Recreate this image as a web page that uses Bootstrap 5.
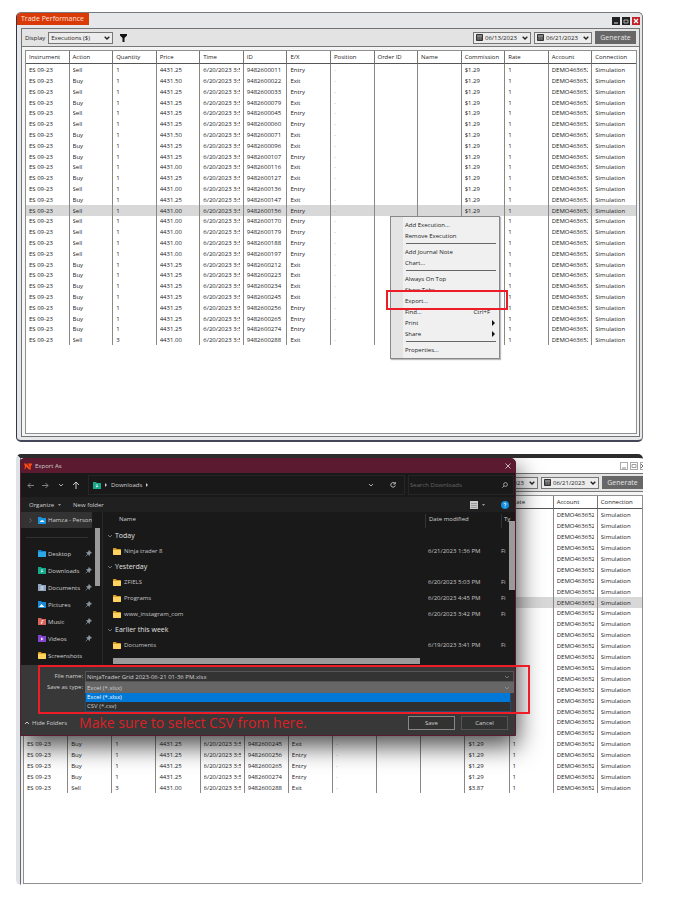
<!DOCTYPE html>
<html lang="en">
<head>
<meta charset="utf-8">
<meta name="viewport" content="width=device-width, initial-scale=1">
<title>Trade Performance</title>
<link href="https://cdn.jsdelivr.net/npm/bootstrap@5.3.0/dist/css/bootstrap.min.css" rel="stylesheet">
<style>
body{font-family:"Open Sans","Noto Sans",sans-serif;font-size:6px;line-height:10px;color:#222;background:#fff}
.page{padding:12px 40px 12px 16px;gap:12px}
button,input,select{font:inherit;color:inherit;border:0;border-radius:0;background:none;padding:0;margin:0;appearance:none;min-width:0}
svg{display:block;flex:none}
.win{height:430px;overflow:hidden;border-radius:5px}
.win-a{background:#e6e7e9;border:1px solid #77797c;border-left-color:#33364a;border-bottom:2px solid #44465a}
.titlebar{height:15px;padding-right:2px}
.tab-on{background:#d93a08;color:#ffe3d8;height:12px;width:72px;font-size:7px;line-height:12px;padding:0 0 0 4px;white-space:nowrap}
.ctl{width:8px;height:8px;background:#222;margin-left:2px}
.ctl.close-x{background:#c4202b}
.frame{border:1px solid #717375;background:#f4f4f4}
.win-a .frame{margin:0 2px 3px 4px}
.tools{height:18px;background:#e3e3e3;border-bottom:1px solid #77797a;padding:0 3px;gap:3px}
.dd{border:1px solid #777;height:12px;background:#ececec;padding:0 2px;gap:2px}
.dd.wide{width:65px}.dd.date{width:58px}
.gen{height:13px;width:41px;background:#676767;color:#e6e6e6;font-size:7px;line-height:13px}
.gridbox{background:#fff;border:1px solid #8d8f91;margin:3px 2px 2px 3px}
.grid{width:100%;table-layout:fixed;border-collapse:separate;border-spacing:0;margin:0}
.grid th{height:13px;font-weight:400;border-bottom:1px solid #555;border-right:1px solid #777;padding:0 2px 0 3px;line-height:12px}
.grid td{height:11px;line-height:10px;padding:0 3px 0 3px;border-right:1px solid #888}
.grid tr>:last-child{border-right:0}
.grid td div{overflow:hidden;white-space:nowrap;height:10px}
.grid-a tbody tr:nth-child(5n) td,.grid-b tbody tr:nth-child(10n) td{height:10px}
.grid .sel td{background:#d8d8d8}
.grid .dash{color:#aaa}
.ctx{left:373px;top:203px;width:110px;background:#f0f0f0;border:1px solid #888;padding:2px 3px 3px 0;box-shadow:1px 1px 1px #bbb}
.ctx::before{content:"";position:absolute;left:0;top:0;bottom:0;width:12px;background:#e4e4e4}
.ctx button{display:flex;justify-content:space-between;align-items:center;width:100%;height:11px;padding:0 1px 0 14px;position:relative;text-align:left}
.ctx hr{margin:2px 0 2px 15px;border:0;border-top:1px solid #666;opacity:1}
.ctx .key{margin-right:5px}
.redbox{border:2px solid #ee1c24;pointer-events:none}
.rb-a{left:369px;top:277px;width:122px;height:20px}
.rb-b{left:18px;top:207px;width:492px;height:49px}
.win-b{height:431px;background:#fff;border-top:4px solid #2c2c2c;border-left:4px solid #dfe2e6}
.win-b::before{content:"";position:absolute;left:0;top:0;bottom:0;width:1px;background:#66686b}
.win-b .titlebar{height:15px;padding:0}
.win-b .ctl{background:#fff;border:1px solid #aaa}
.win-b .frame{border-right:0;border-bottom:0;margin-bottom:1px}
.win-b .gridbox{margin:3px 0 0 2px;height:389px}
.dlg{left:0;top:0;width:496px;height:278px;background:#191919;color:#d0d0d0;border:1px solid #5b1a30;border-radius:4px 5px 0 0;box-shadow:2px 10px 24px rgba(0,0,0,.7)}
.dlg-title{height:14px;background:#5b1a30;padding:0 4px 0 3px;gap:3px;border-radius:3px 4px 0 0}
.dlg-nav{height:24px;padding:2px 1px 2px 4px;gap:3px}
.arrows{width:60px;padding:0 5px 0 2px}
.well{border:1px solid #262626;height:20px;padding:0 4px;gap:4px}
.search{width:106px;padding:0 5px 0 1px}
.search input::placeholder{color:#666;opacity:1}
.dlg-tools{height:15px;background:#202020;padding:0 6px 0 8px;gap:12px}
.side{width:82px;border-right:1px solid #292929;height:153px}
.side-top{height:16px;background:#333;width:71px;padding-left:8px;gap:6px;white-space:nowrap;overflow:hidden}
.side-top div{gap:2px}
.side-rule{height:1px;background:#303030;margin:9px 14px 7px 5px}
.side a{display:flex;align-items:center;height:17px;gap:2px;padding:0 10px 0 17px;color:inherit;text-decoration:none}
.side a svg:last-child:not(:first-child){margin-left:auto}
.thumb{background:#9a9a9a}
.th-side{left:74px;top:16px;width:5px;height:58px}
.th-list{right:0;top:9px;width:6px;height:69px}
.th-h{left:10px;bottom:1px;width:307px;height:6px}
.row-head{height:16px;padding-top:2px}
.c-name{padding-left:16px}
.c-date{width:76px;padding-left:3px}
.c-type{width:11px;white-space:nowrap;margin-right:3px}
.row-head .c-date,.row-head .c-type{border-left:1px solid #333}
.row-head .c-type{width:11px;padding-left:2px}
.grp{height:15px;font-size:7px;padding-left:4px;gap:2px;color:#e0e0e0}
.file{height:16px;color:#c4c4c4}
.file .c-name{padding-left:10px;gap:3px}
.dlg-foot{background:#383838;padding:6px 1px 0 0;height:70px}
.field{display:grid;grid-template-columns:62px 1fr;column-gap:2px;text-align:right}
.field>div{height:11px;border:1px solid #555;background:#333;padding:0 3px 0 1px}
.field>div.lit{background:#666;border-color:#666}
.opts{margin:0 3px 0 64px;border:1px solid #234a70;border-top:0;background:#2f2f2f}
.opts button{display:block;width:100%;text-align:left;height:9px;line-height:9px;padding-left:1px}
.opts button.on{background:#0078d7;color:#fff}
.acts{padding:2px 6px 0 3px;gap:6px}
.acts .push{width:47px;height:14px;border:1px solid #555;background:#323232}
.acts .push.def{border-color:#888}
.note{font-size:14px;line-height:17px;color:#dd1f26;white-space:nowrap;padding-left:6px}
.hide-f{gap:2px}
</style>
<script src="https://cdn.jsdelivr.net/npm/bootstrap@5.3.0/dist/js/bootstrap.bundle.min.js"></script>
</head>
<body>
<svg width="0" height="0" class="position-absolute" aria-hidden="true">
<symbol id="chev" viewBox="0 0 6 4"><path d="M.7.7 3 3 5.300.7" fill="none" stroke="currentColor" stroke-width="1.400"/></symbol>
<symbol id="thin" viewBox="0 0 6 4"><path d="M1 1 3 3 5 1" fill="none" stroke="currentColor" stroke-width=".8"/></symbol>
<symbol id="cal" viewBox="0 0 7 7"><path d="M.5.5h6v6h-6z" fill="#555" stroke="#333"/><path d="M1 2h5" stroke="#ddd" stroke-width=".7"/><path d="M1 4h5M2.500 2.500V6M4.500 2.500V6" stroke="#888" stroke-width=".4"/></symbol>
<symbol id="folder" viewBox="0 0 8 7"><path d="M0 .8Q0 0 .8 0h2l1 1h3.400q.8 0 .8.8V6q0 1-.8 1H.8Q0 7 0 6z" fill="#dd9f25"/><path d="M0 2h8v4q0 1-.8 1H.8Q0 7 0 6z" fill="#ffd35f"/></symbol>
<symbol id="pin" viewBox="0 0 7 7"><path d="M4 .5 6.500 3 5.500 3.300 4.600 4.200 4.400 5.600 1.500 2.600 2.900 2.400 3.700 1.500zM3 4 .7 6.300" fill="#8d979f" stroke="#8d979f" stroke-width=".7"/></symbol>
</svg>
<main class="page d-flex flex-column">

<section class="win win-a position-relative d-flex flex-column">
  <div class="titlebar d-flex flex-shrink-0">
    <div class="tab-on">Trade Performance</div>
    <div class="d-flex ms-auto align-items-center controls">
      <button class="ctl" aria-label="Minimize"><svg width="8" height="8"><path d="M2 6h4" stroke="#ddd"/></svg></button>
      <button class="ctl" aria-label="Maximize"><svg width="8" height="8"><path d="M2 3h4v3H2z" fill="none" stroke="#ccc" stroke-width=".8"/></svg></button>
      <button class="ctl close-x" aria-label="Close"><svg width="8" height="8"><path d="M2 2l4 4M6 2 2 6" stroke="#fff" stroke-width="1.300"/></svg></button>
    </div>
  </div>
  <div class="frame flex-grow-1 d-flex flex-column">
    <div class="tools d-flex align-items-center flex-shrink-0">
      <label for="disp">Display</label>
      <div class="dd wide d-flex align-items-center"><select id="disp" class="flex-grow-1"><option>Executions ($)</option></select><svg width="6" height="4"><use href="#chev"/></svg></div>
      <button class="ms-1" aria-label="Filter"><svg width="7" height="8"><path d="M0 0h7v1.500L4.500 4v4h-2V4L0 1.500z" fill="#111"/></svg></button>
      <div class="dd date d-flex align-items-center ms-auto"><svg width="7" height="7"><use href="#cal"/></svg><select class="flex-grow-1" aria-label="From date"><option>06/13/2023</option></select><svg width="6" height="4"><use href="#chev"/></svg></div>
      <div class="dd date d-flex align-items-center"><svg width="7" height="7"><use href="#cal"/></svg><select class="flex-grow-1" aria-label="To date"><option>06/21/2023</option></select><svg width="6" height="4"><use href="#chev"/></svg></div>
      <button class="gen">Generate</button>
    </div>
    <div class="gridbox flex-grow-1"><table class="grid grid-a" data-selected="13"></table></div>
  </div>
  <div class="ctx position-absolute">
    <button>Add Execution...</button><button>Remove Execution</button><hr>
    <button>Add Journal Note</button><button>Chart...</button><hr>
    <button>Always On Top</button><button>Show Tabs</button><button>Export...</button>
    <button>Find...<span class="key">Ctrl+F</span></button>
    <button>Print<svg width="3" height="6"><path d="M0 0 3 3 0 6z" fill="#111"/></svg></button>
    <button>Share<svg width="3" height="6"><path d="M0 0 3 3 0 6z" fill="#111"/></svg></button><hr>
    <button>Properties...</button>
  </div>
  <div class="redbox rb-a position-absolute"></div>
</section>

<section class="win win-b position-relative d-flex flex-column">
  <div class="titlebar d-flex flex-shrink-0 justify-content-end align-items-center">
    <button class="ctl" aria-label="Minimize"><svg width="6" height="6"><path d="M1 5h4" stroke="#888"/></svg></button>
    <button class="ctl" aria-label="Maximize"><svg width="6" height="6"><path d="M1 1.500h4v3H1z" fill="none" stroke="#888" stroke-width=".8"/></svg></button>
    <button class="ctl w-auto border-end-0" aria-label="Close"><svg width="2" height="6"><path d="M0 1l2 2-2 2" fill="none" stroke="#666"/></svg></button>
  </div>
  <div class="frame flex-grow-1 d-flex flex-column">
    <div class="tools d-flex align-items-center flex-shrink-0 pe-0">
      <div class="dd date d-flex align-items-center ms-auto"><svg width="7" height="7"><use href="#cal"/></svg><select class="flex-grow-1" aria-label="From date"><option>06/13/2023</option></select><svg width="6" height="4"><use href="#chev"/></svg></div>
      <div class="dd date d-flex align-items-center"><svg width="7" height="7"><use href="#cal"/></svg><select class="flex-grow-1" aria-label="To date"><option>06/21/2023</option></select><svg width="6" height="4"><use href="#chev"/></svg></div>
      <button class="gen">Generate</button>
    </div>
    <div class="gridbox"><table class="grid grid-b" data-selected="8"></table></div>
  </div>

  <div class="dlg position-absolute d-flex flex-column">
    <div class="dlg-title d-flex align-items-center">
      <svg width="8" height="7" viewBox="0 0 8 7"><path d="M0 .5h2l1.500 2V.5H8v1.800H6.800V6.500H5L2 3.500V5L.3 6.500 1 3.500z" fill="#ff4b12"/><path d="M3.800 1 5.500 4.500" stroke="#5b1a30" stroke-width=".6"/></svg>
      <span>Export As</span>
      <button class="ms-auto" aria-label="Close"><svg width="6" height="6"><path d="M.5.5l5 5M5.500.5l-5 5" stroke="#ddd" stroke-width=".8"/></svg></button>
    </div>
    <div class="dlg-nav d-flex align-items-center flex-shrink-0">
      <div class="arrows d-flex justify-content-between align-items-center">
        <button aria-label="Back"><svg width="7" height="7"><path d="M3.500 1 1 3.500 3.500 6M1 3.500h6" fill="none" stroke="#999" stroke-width=".8"/></svg></button>
        <button aria-label="Forward"><svg width="7" height="7"><path d="M3.500 1 6 3.500 3.500 6M6 3.500H0" fill="none" stroke="#999" stroke-width=".8"/></svg></button>
        <button aria-label="Recent"><svg width="6" height="4"><use href="#thin"/></svg></button>
        <button aria-label="Up"><svg width="8" height="8"><path d="M1 4 4 1l3 3M4 1v7" fill="none" stroke="#ddd" stroke-width=".9"/></svg></button>
      </div>
      <div class="well d-flex align-items-center flex-grow-1">
        <svg width="8" height="7"><path d="M0 0h3l1 1h4v6H0z" fill="#15a88a"/><path d="M4 2v3M2.800 4 4 5.200 5.200 4" stroke="#fff" fill="none" stroke-width=".7"/></svg>
        <svg width="2" height="4"><path d="M0 0 2 2 0 4z" fill="#ccc"/></svg>
        <span>Downloads</span>
        <svg width="2" height="4"><path d="M0 0 2 2 0 4z" fill="#ccc"/></svg>
        <button class="ms-auto me-2" aria-label="History"><svg width="6" height="4"><use href="#thin"/></svg></button>
        <button class="ms-1 me-1" aria-label="Refresh"><svg width="6" height="6"><path d="M5 1.500A2.300 2.300 0 1 0 5.300 3.500M5.300 0v2H3.300" fill="none" stroke="#ccc" stroke-width=".9"/></svg></button>
      </div>
      <div class="well search d-flex align-items-center">
        <input class="flex-grow-1" type="text" placeholder="Search Downloads" aria-label="Search Downloads">
        <svg width="6" height="6"><circle cx="3.500" cy="2.500" r="1.900" fill="none" stroke="#ccc" stroke-width=".7"/><path d="M2 4 .4 5.600" stroke="#ccc" stroke-width=".8"/></svg>
      </div>
    </div>
    <div class="dlg-tools d-flex align-items-center flex-shrink-0">
      <button class="d-flex align-items-center">Organize<svg class="ms-1" width="3" height="2"><path d="M0 0h3L1.500 2z" fill="#999"/></svg></button>
      <button>New folder</button>
      <button class="ms-auto d-flex align-items-center me-1" aria-label="View"><svg width="8" height="8"><path d="M0 0h8v8H0z" fill="#ccc"/><path d="M1 2.500h6M1 4.500h6M1 6.500h6" stroke="#777" stroke-width=".6"/></svg><svg class="ms-1" width="3" height="2"><path d="M0 0h3L1.500 2z" fill="#999"/></svg></button>
      <button aria-label="Help"><svg width="8" height="8"><circle cx="4" cy="4" r="4" fill="#148ddd"/><path d="M2.900 3.200Q3 2 4 2t1.100 1.100Q5 3.700 4 4.300V5M4 5.600v.8" fill="none" stroke="#fff" stroke-width=".8"/></svg></button>
    </div>
    <div class="d-flex flex-shrink-0">
      <nav class="side position-relative flex-shrink-0">
        <div class="side-top d-flex align-items-center"><svg width="3" height="5"><path d="M.5.5l2 2-2 2" fill="none" stroke="#777" stroke-width=".8"/></svg>
          <div class="d-flex align-items-center flex-shrink-0"><svg width="8" height="7"><path d="M0 0h3l1 1h4v6H0z" fill="#1b93e0"/><path d="M2 5q0-1.500 1.300-1.500Q4 2.500 5 3.500q1.300 0 1.300 1.500z" fill="#fff"/></svg><span>Hamza - Persona</span></div></div>
        <div class="side-rule"></div>
        <a href="#"><svg width="8" height="7"><path d="M0 0h3l1 1h4v6H0z" fill="#1686cd"/><path d="M0 2h8v5H0z" fill="#2ba9e6"/></svg>Desktop<svg width="7" height="7"><use href="#pin"/></svg></a>
        <a href="#"><svg width="8" height="7"><path d="M0 0h3l1 1h4v6H0z" fill="#15a88a"/><path d="M4 2v3M2.800 4 4 5.200 5.200 4" stroke="#fff" fill="none" stroke-width=".7"/></svg>Downloads<svg width="7" height="7"><use href="#pin"/></svg></a>
        <a href="#"><svg width="8" height="7"><path d="M0 0h3l1 1h4v6H0z" fill="#8fa5bd"/><path d="M2.500 3h3M2.500 5h3" stroke="#fff" stroke-width=".8"/></svg>Documents<svg width="7" height="7"><use href="#pin"/></svg></a>
        <a href="#"><svg width="8" height="7"><path d="M0 0h3l1 1h4v6H0z" fill="#1787d4"/><path d="M1 6l2.500-3L6.500 6z" fill="#fff"/></svg>Pictures<svg width="7" height="7"><use href="#pin"/></svg></a>
        <a href="#"><svg width="8" height="7"><path d="M0 0h3l1 1h4v6H0z" fill="#d9655a"/><path d="M4 5V2.500h1.500" stroke="#fff" fill="none" stroke-width=".7"/><circle cx="3.500" cy="5" r=".8" fill="#fff"/></svg>Music<svg width="7" height="7"><use href="#pin"/></svg></a>
        <a href="#"><svg width="8" height="7"><path d="M0 0h3l1 1h4v6H0z" fill="#8444cf"/><path d="M3 2.500 5.500 4 3 5.500z" fill="#fff"/></svg>Videos<svg width="7" height="7"><use href="#pin"/></svg></a>
        <a href="#"><svg width="8" height="7"><use href="#folder"/></svg>Screenshots</a>
        <div class="thumb th-side position-absolute"></div>
      </nav>
      <div class="position-relative flex-grow-1" id="files">
        <div class="row-head d-flex"><span class="c-name flex-grow-1">Name</span><span class="c-date">Date modified</span><span class="c-type">Ty</span></div>
        <div class="thumb th-list position-absolute"></div>
        <div class="thumb th-h position-absolute"></div>
      </div>
    </div>
    <div class="dlg-foot flex-grow-1">
      <div class="field"><label for="fn">File name:</label><div class="d-flex align-items-center"><input id="fn" class="flex-grow-1" type="text" value="NinjaTrader Grid 2023-06-21 01-36 PM.xlsx"><svg width="6" height="4" color="#888"><use href="#thin"/></svg></div></div>
      <div class="field"><label for="ft">Save as type:</label><div class="lit d-flex align-items-center"><select id="ft" class="flex-grow-1"><option>Excel (*.xlsx)</option><option>CSV (*.csv)</option></select><svg width="6" height="4" color="#999"><use href="#thin"/></svg></div></div>
      <div class="opts"><button class="on">Excel (*.xlsx)</button><button>CSV (*.csv)</button></div>
      <div class="acts d-flex align-items-center">
        <button class="hide-f d-flex align-items-center"><svg width="6" height="4"><path d="M1 3 3 1 5 3" fill="none" stroke="#ddd" stroke-width=".9"/></svg>Hide Folders</button>
        <span class="note">Make sure to select CSV from here.</span>
        <button class="push def ms-auto">Save</button><button class="push">Cancel</button>
      </div>
    </div>
  </div>
  <div class="redbox rb-b position-absolute"></div>
</section>
</main>
<script>
const heads = ["Instrument","Action","Quantity","Price","Time","ID","E/X","Position","Order ID","Name","Commission","Rate","Account","Connection"];
const trades = [
 ["Sell","4431.25","011"],["Buy","4431.50","022"],["Sell","4431.25","033"],["Buy","4431.25","079"],["Sell","4431.25","045"],["Sell","4431.25","060"],
 ["Buy","4431.50","071"],["Buy","4431.25","096"],["Buy","4431.25","107"],["Sell","4431.00","116"],["Buy","4431.25","127"],["Sell","4431.00","136"],
 ["Buy","4431.25","147"],["Sell","4431.00","156"],["Sell","4431.00","170"],["Sell","4431.00","179"],["Sell","4431.00","188"],["Sell","4431.00","197"],
 ["Buy","4431.25","212"],["Buy","4431.25","223"],["Buy","4431.25","234"],["Buy","4431.25","245"],["Buy","4431.25","256"],["Buy","4431.25","265"],
 ["Buy","4431.25","274"],["Sell","4431.00","288"]];
const exits = new Set(["022","079","071","096","116","127","147","212","223","234","245","288"]);
document.querySelectorAll(".grid").forEach(t => {
  const sel = +t.dataset.selected;
  const body = trades.map(([act, price, id], i) => {
    const last = i === trades.length - 1;
    const cells = ["ES 09-23", act, last ? 3 : 1, price, "6/20/2023 3:5", "9482600" + id, exits.has(id) ? "Exit" : "Entry", "-", "", "", last ? "$3.87" : "$1.29", "1", "DEMO463652", "Simulation"];
    return `<tr${i === sel ? ' class="sel"' : ""}>` + cells.map(c => `<td${c === "-" ? ' class="dash"' : ""}><div>${c}</div></td>`).join("") + "</tr>";
  }).join("");
  t.innerHTML = "<thead><tr>" + heads.map(h => `<th scope="col">${h}</th>`).join("") + "</tr></thead><tbody>" + body + "</tbody>";
});
const groups = [
 ["Today", [["Ninja trader 8","6/21/2023 1:36 PM"]]],
 ["Yesterday", [["ZFIELS","6/20/2023 5:03 PM"],["Programs","6/20/2023 4:45 PM"],["www_instagram_com","6/20/2023 3:42 PM"]]],
 ["Earlier this week", [["Documents","6/19/2023 3:41 PM"]]]];
document.querySelector("#files .row-head").insertAdjacentHTML("afterend", groups.map(([g, items]) =>
 `<div class="grp d-flex align-items-center"><svg width="6" height="4" color="#888"><use href="#thin"/></svg>${g}</div>` +
 items.map(([n, d]) => `<div class="file d-flex align-items-center"><span class="c-name d-flex align-items-center flex-grow-1"><svg width="8" height="7"><use href="#folder"/></svg>${n}</span><span class="c-date">${d}</span><span class="c-type">Fi</span></div>`).join("")).join(""));
</script>
</body>
</html>
